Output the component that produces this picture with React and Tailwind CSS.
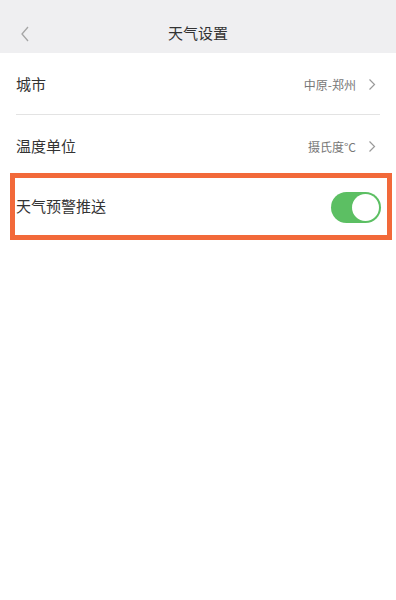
const font = { fontFamily: '"Noto Sans CJK SC", "Liberation Sans", sans-serif' };

function Chevron() {
  return (
    <svg width="8" height="13" viewBox="0 0 8 13" fill="none" className="ml-3">
      <path d="M1.5 1.5 L6.5 6.5 L1.5 11.5" stroke="#9a9a9a" strokeWidth="1.2" />
    </svg>
  );
}

export default function App() {
  return (
    <div className="w-[396px] h-[600px] bg-white text-[#333]" style={font}>
      <div className="h-[53px] bg-[#efeff1] flex items-center relative pt-[13px]">
        <svg width="10" height="16" viewBox="0 0 10 16" fill="none" className="absolute left-[20px] top-[26px]">
          <path d="M8 1 L2 8 L8 15" stroke="#a5a5a5" strokeWidth="1.3" />
        </svg>
        <div className="flex-1 text-center text-[15px] text-[#333]">天气设置</div>
      </div>

      <div className="pl-4 pr-4">
        <div className="h-[62px] flex items-center justify-between border-b border-[#e3e3e3] pt-[2px]">
          <span className="text-[15px]">城市</span>
          <div className="flex items-center text-[12px] text-[#777] pr-1">
            中原-郑州
            <Chevron />
          </div>
        </div>
        <div className="h-[58px] flex items-center justify-between pt-[5px]">
          <span className="text-[15px]">温度单位</span>
          <div className="flex items-center text-[12px] text-[#777] pr-1">
            摄氏度°C
            <Chevron />
          </div>
        </div>
      </div>

      <div className="ml-[10px] mr-[4px] h-[67px] border-[5px] border-[#f2693a] flex items-center justify-between pl-[1px] pr-[6px]">
        <span className="text-[15px]">天气预警推送</span>
        <div className="w-[50px] h-[31px] rounded-full bg-[#5cbf63] flex items-center justify-end pr-[2px] mt-[2px]">
          <div className="w-[27px] h-[27px] rounded-full bg-white"></div>
        </div>
      </div>
    </div>
  );
}
